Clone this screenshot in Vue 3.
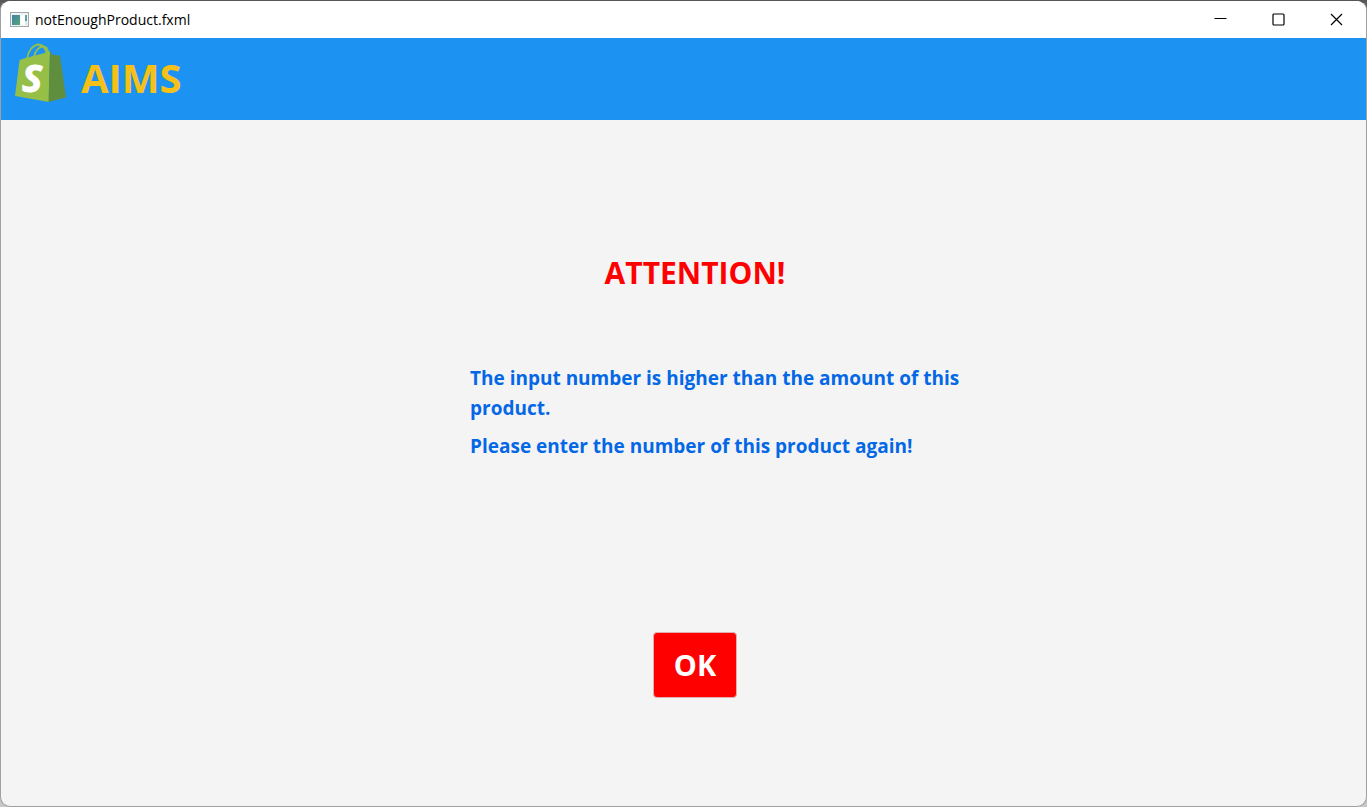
<script setup>
const windowTitle = 'notEnoughProduct.fxml'
const lines = [
  'The input number is higher than the amount of this product.',
  'Please enter the number of this product again!',
]
</script>

<template>
  <div class="desktop">
    <div class="window">
      <div class="titlebar">
        <svg class="app-icon" width="19" height="16" viewBox="0 0 19 16" aria-hidden="true">
          <defs>
            <linearGradient id="pane" x1="0" y1="0" x2="1" y2="1">
              <stop offset="0" stop-color="#3f7fa8" />
              <stop offset="1" stop-color="#55a878" />
            </linearGradient>
          </defs>
          <rect x="0.5" y="0.5" width="18" height="14" fill="#f0f2f4" stroke="#a3a8ad" />
          <rect x="2" y="3" width="8" height="10" fill="url(#pane)" />
          <rect x="11" y="3" width="4" height="10" fill="#ffffff" />
          <rect x="15" y="3" width="2" height="6" fill="#62a0a8" />
          <rect x="15" y="9" width="2" height="4" fill="#dfe4e6" />
        </svg>
        <span class="title">{{ windowTitle }}</span>
        <div class="controls">
          <button type="button" class="control" aria-label="Minimize">
            <svg width="13" height="13" viewBox="0 0 13 13"><path d="M0.5 5.500H12.500" /></svg>
          </button>
          <button type="button" class="control" aria-label="Maximize">
            <svg width="13" height="13" viewBox="0 0 13 13"><rect x="1" y="1" width="11" height="11" rx="1" /></svg>
          </button>
          <button type="button" class="control" aria-label="Close">
            <svg width="13" height="13" viewBox="0 0 13 13"><path d="M1 1L12 12M12 1L1 12" /></svg>
          </button>
        </div>
      </div>

      <header class="brand">
        <svg class="logo" width="52" height="60" viewBox="0 0 52 60" aria-hidden="true">
          <g fill="none" stroke="#95bf47" stroke-width="1.8">
            <path d="M12 16C13 8 18 1.500 24 1.500C29 2 31 6 32 12" />
            <path d="M19 14C20 8 24 3.500 28 3.500C31 3.500 33 6 33.500 11" />
          </g>
          <path d="M4.500 17.500Q5 16.500 8 15.800L35 8.500L34 59L0 53Z" fill="#95bf47" />
          <path d="M35 8.500L38 12L45 12.500L51 54.500L33.500 59Z" fill="#5e8e3e" />
          <text x="7" y="49" class="logo-letter">S</text>
        </svg>
        <span class="name">AIMS</span>
      </header>

      <main class="content">
        <section class="dialog">
          <h1 class="heading">ATTENTION!</h1>
          <div class="message">
            <p v-for="line in lines" :key="line">{{ line }}</p>
          </div>
          <button type="button" class="ok">OK</button>
        </section>
      </main>
    </div>
  </div>
</template>

<style>
body {
  background: #c8c8c8;
}
</style>

<style scoped>
.desktop {
  min-height: 100vh;
  display: flex;
  background: linear-gradient(#555555, #c8c8c8 40px);
  font-family: "Open Sans", "Noto Sans", sans-serif;
}
.window {
  flex: 1;
  display: flex;
  flex-direction: column;
  box-sizing: border-box;
  border: 1px solid #a0a0a0;
  border-top-color: #555555;
  border-radius: 10px;
  overflow: hidden;
  background: #f4f4f4;
}
.titlebar {
  display: flex;
  align-items: center;
  height: 37px;
  padding-left: 9px;
  background: #ffffff;
}
.title {
  margin-left: 6px;
  font-size: 14px;
  color: #000000;
}
.controls {
  display: flex;
  align-self: stretch;
  margin-left: auto;
  padding-right: 1px;
}
.control {
  display: flex;
  align-items: center;
  justify-content: center;
  width: 58px;
  padding: 0;
  border: 0;
  background: transparent;
}
.control svg {
  fill: none;
  stroke: #000000;
  stroke-width: 1.2;
}
.brand {
  display: flex;
  align-items: center;
  gap: 14px;
  height: 82px;
  padding: 0 0 2px 14px;
  box-sizing: border-box;
  background: #1c92f2;
}
.logo {
  margin-bottom: 10px;
}
.logo-letter {
  font-size: 38px;
  font-weight: 700;
  font-style: italic;
  fill: #ffffff;
  stroke: #ffffff;
  stroke-width: 1;
}
.name {
  font-size: 40px;
  font-weight: 700;
  line-height: 56px;
  color: #f5c018;
}
.content {
  display: flex;
  justify-content: center;
  padding: 132px 0 0 23px;
}
.dialog {
  display: flex;
  flex-direction: column;
  align-items: center;
  width: 540px;
}
.heading {
  margin: 0;
  font-size: 30px;
  line-height: 42px;
  font-weight: 700;
  color: #ff0000;
}
.message {
  align-self: stretch;
  margin: 69px 0 0 45px;
  font-size: 19px;
  line-height: 30px;
  font-weight: 700;
  color: #0468e6;
}
.message p {
  margin: 0 0 8px;
}
.ok {
  width: 84px;
  height: 66px;
  margin-top: 163px;
  padding: 0 0 2px;
  border: 1px solid #e0b0b0;
  border-radius: 4px;
  background: #ff0000;
  font-family: inherit;
  font-size: 29px;
  font-weight: 700;
  color: #ffffff;
}
</style>
